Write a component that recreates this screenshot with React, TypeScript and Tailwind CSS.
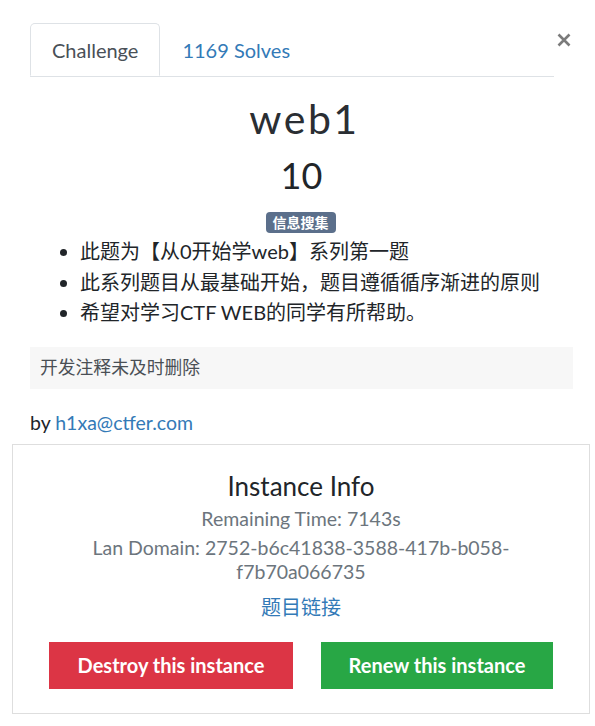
import React from 'react';

const FONT = 'font-[Lato,"Noto_Sans_CJK_SC",sans-serif]';

const CloseIcon = () => (
  <svg width="14" height="14" viewBox="0 0 14 14" className="block">
    <path d="M1.5 1.5 L12.5 12.5 M12.5 1.5 L1.5 12.5" stroke="#7b7b7b" strokeWidth="2.6" strokeLinecap="butt" />
  </svg>
);

const App: React.FC = () => {
  const bullets = [
    '此题为【从0开始学web】系列第一题',
    '此系列题目从最基础开始，题目遵循循序渐进的原则',
    '希望对学习CTF WEB的同学有所帮助。',
  ];

  return (
    <div className={`relative w-[595px] min-h-[726px] bg-white text-[#212529] ${FONT}`}>
      {/* close button */}
      <button className="absolute left-[557px] top-[33px]" aria-label="Close">
        <CloseIcon />
      </button>

      <div className="pt-[23px]">
        {/* tabs */}
        <div className="ml-[30px] w-[524px] flex border-b border-[#dee2e6]">
          <div className="-mb-px h-[53px] px-[21px] flex items-center bg-white border border-[#dee2e6] border-b-white rounded-t-[5px] text-[20px] text-[#495057]">
            Challenge
          </div>
          <div className="h-[53px] px-[22px] flex items-center text-[20px] text-[#337ab7]">
            1169 Solves
          </div>
        </div>

        {/* title block */}
        <div className="flex flex-col items-center pl-[6px]">
          <h2 className="mt-[16px] h-[52px] pl-[8px] leading-[52px] text-[41px] tracking-[2.5px] font-normal text-[#2a2e33]">web1</h2>
          <h3 className="mt-[8px] h-[44px] pl-[2px] leading-[44px] text-[36px]">10</h3>
          <span className="mt-[15px] h-[21px] px-[7px] rounded-[4px] bg-[#5b6f8b] text-white text-[14px] font-bold leading-[21px]">
            信息搜集
          </span>
        </div>

        {/* description */}
        <ul className="mt-[3px] pl-[80px] list-disc text-[20px] leading-[30.5px] marker:text-[#212529]">
          {bullets.map((b) => (
            <li key={b}>{b}</li>
          ))}
        </ul>

        <div className="mt-[19px] ml-[30px] w-[543px] h-[42px] bg-[#f7f7f7] flex items-center pl-[10px] text-[17.8px] text-[#4a4f55]">
          开发注释未及时删除
        </div>

        <div className="mt-[19px] ml-[30px] text-[19.5px] leading-[30px]">
          by <span className="text-[#337ab7]">h1xa@ctfer.com</span>
        </div>

        {/* instance info */}
        <div className="mt-[6px] ml-[12px] w-[578px] h-[270px] border border-[#dedede] flex flex-col items-center">
          <div className="mt-[24px] text-[26px] leading-[34px] text-[#212529]">Instance Info</div>
          <div className="mt-[3px] text-[19.5px] leading-[26px] text-[#6c757d]">Remaining Time: 7143s</div>
          <div className="mt-[4px] text-[19.5px] leading-[24px] text-[#6c757d] text-center">
            Lan Domain: 2752-b6c41838-3588-417b-b058-
            <br />
            f7b70a066735
          </div>
          <a href="#" className="mt-[9px] text-[20px] leading-[28px] text-[#337ab7]">题目链接</a>
          <div className="mt-[21px] flex gap-[28px]">
            <button className="w-[244px] h-[47px] bg-[#dc3545] text-white text-[20px] font-bold">
              Destroy this instance
            </button>
            <button className="w-[232px] h-[47px] bg-[#28a745] text-white text-[20px] font-bold">
              Renew this instance
            </button>
          </div>
        </div>
      </div>
    </div>
  );
};

export default App;
